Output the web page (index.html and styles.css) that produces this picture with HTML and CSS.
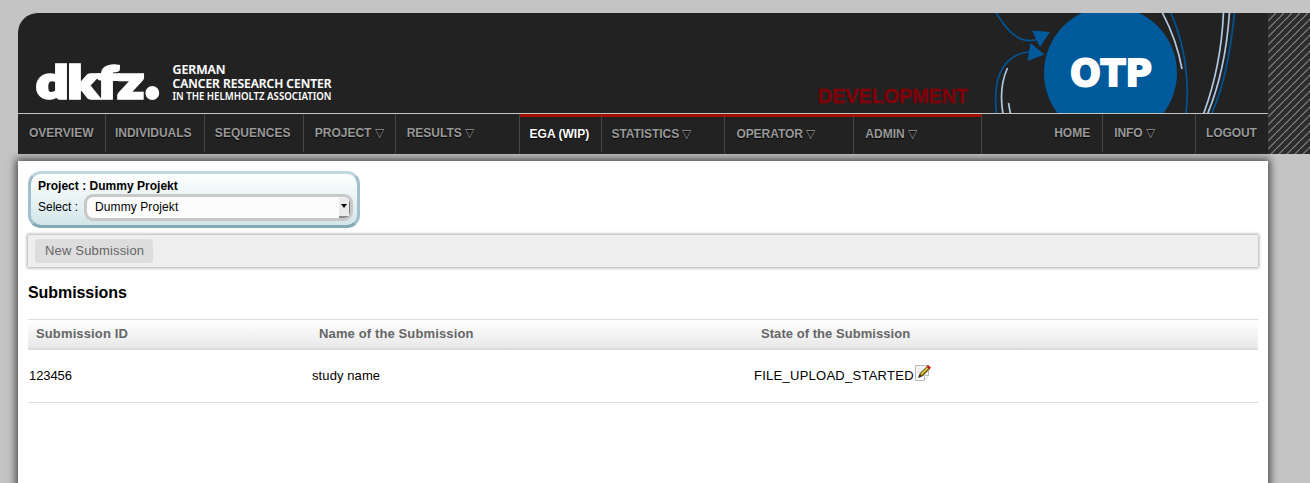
FILE: index.html
```html
<!DOCTYPE html>
<html lang="en">
<head>
<meta charset="utf-8">
<title>OTP - Submissions</title>
<link rel="stylesheet" href="styles.css">
</head>
<body>
<header class="top">
  <div class="header">
    <div class="banner">
      <svg class="banner-art" width="1250" height="100" viewBox="18 13 1250 100">
        <g class="logo">
          <text class="logo-main" x="36.500" y="98" textLength="107" lengthAdjust="spacingAndGlyphs">dkfz</text>
          <circle cx="152.300" cy="93" r="6.900"/>
          <text class="logo-sub" x="172.500" y="74" textLength="53" lengthAdjust="spacingAndGlyphs">GERMAN</text>
          <text class="logo-sub" x="172.500" y="87.500" textLength="159" lengthAdjust="spacingAndGlyphs">CANCER RESEARCH CENTER</text>
          <text class="logo-small" x="172.500" y="99.500" textLength="159" lengthAdjust="spacingAndGlyphs">IN THE HELMHOLTZ ASSOCIATION</text>
        </g>
        <text class="stage" x="818" y="103" textLength="150" lengthAdjust="spacingAndGlyphs">DEVELOPMENT</text>
        <circle class="blue-fill" cx="1110.500" cy="73" r="66.500"/>
        <g class="blue-line">
          <path d="M995.500 12C1007 31 1020 45 1037 39.500"/>
          <path d="M996.500 114C992 74 1005 54 1031 51.500"/>
          <path d="M1170.500 12C1184 42 1190 79 1186 114"/>
          <path d="M1234.500 12C1231 49 1225 84 1211.500 114"/>
        </g>
        <path class="blue-fill" d="M1032 30.500L1050 32L1040 47zM1030.500 43L1044.500 54.500L1027.500 61z"/>
        <g class="pale-line">
          <path d="M1007.500 68C1001 82 1000.500 99 1003 114"/>
          <path d="M1008.500 103L1010.500 114"/>
          <path d="M1162 12C1171 29 1178 47 1182 69"/>
          <path d="M1223.500 12C1222 48 1215 83 1203.500 114"/>
          <path d="M1229.500 12C1227 49 1220 84 1207.500 114"/>
        </g>
        <text class="otp" x="1070" y="85.500" textLength="82" lengthAdjust="spacingAndGlyphs">OTP</text>
      </svg>
    </div>
    <nav class="menu">
      <a class="item overview short">OVERVIEW</a>
      <a class="item individuals short">INDIVIDUALS</a>
      <a class="item sequences short">SEQUENCES</a>
      <a class="item project">PROJECT <i class="arrow">▽</i></a>
      <a class="item results">RESULTS <i class="arrow">▽</i></a>
      <a class="item ega red short">EGA (WIP)</a>
      <a class="item statistics red">STATISTICS <i class="arrow">▽</i></a>
      <a class="item operator red">OPERATOR <i class="arrow">▽</i></a>
      <a class="item admin red">ADMIN <i class="arrow">▽</i></a>
      <a class="item home short">HOME</a>
      <a class="item info">INFO <i class="arrow">▽</i></a>
      <a class="item logout">LOGOUT</a>
    </nav>
  </div>
  <svg class="hatch" width="42" height="141">
    <defs><pattern id="stripes" width="8" height="8" patternUnits="userSpaceOnUse">
      <rect width="8" height="8" fill="#2d2d2d"/>
      <path d="M-1 9L9-1" stroke="#858585" stroke-width="1.200"/>
    </pattern></defs>
    <rect width="42" height="141" fill="url(#stripes)"/>
  </svg>
</header>
<main class="content">
  <section class="project-box">
    <div class="project-title">Project : Dummy Projekt</div>
    <div class="project-row">
      <span class="select-label">Select :</span>
      <div class="select"><span class="select-value">Dummy Projekt</span><span class="select-button"></span></div>
    </div>
  </section>
  <div class="toolbar"><a class="button">New Submission</a></div>
  <h1 class="title">Submissions</h1>
  <div class="table">
    <div class="row head"><span>Submission ID</span><span>Name of the Submission</span><span class="head-state">State of the Submission</span></div>
    <div class="row data"><span class="c-id">123456</span><span class="c-name">study name</span><span class="state"><span class="state-text">FILE_UPLOAD_STARTED</span><svg class="edit" width="16" height="16" viewBox="0 0 16 16">
      <path d="M.5.500h13v10l-4 5h-9z" fill="#f6f6f6" stroke="#b9b9b9"/>
      <path d="M9.500 15v-4.500h4" fill="#fff" stroke="#b9b9b9"/>
      <path d="M2.500 4h6M2.500 6h5M2.500 8h3" stroke="#e2e2e2"/>
      <path d="M4 12l1-4L12 1.200l3 2.600L8 11z" fill="#6b5810"/>
      <path d="M5.500 9L12.500 2l1.200 1L6.800 10z" fill="#e9d34a"/>
      <path d="M3 13l1.500-4 2.500 2.500z" fill="#34301f"/>
      <path d="M11.500 1.500L13 0l3 2.500-1.500 2z" fill="#c51d1d"/>
    </svg></span></div>
  </div>
</main>
</body>
</html>
```
FILE: styles.css
```css
* { box-sizing: border-box; }
body {
  margin: 0;
  height: 483px;
  overflow: hidden;
  display: flex;
  flex-direction: column;
  background: #c4c4c4;
  color: #000;
  font-family: "Liberation Sans", Arial, sans-serif;
  font-size: 13px;
}
.top { display: flex; padding: 13px 0 0 18px; flex: none; }
.header { width: 1250px; height: 141px; background: #222; border-top-left-radius: 20px; overflow: hidden; }
.banner { height: 101px; border-bottom: 1px solid #c4c4c4; }
.banner-art { display: block; }
.hatch { display: block; flex: none; }
.logo { fill: #fff; }
.logo-main { font: 900 44px Lato, sans-serif; stroke: #fff; stroke-width: 3.4px; }
.logo-sub { font: 600 12px "Noto Sans", sans-serif; stroke: #fff; stroke-width: .15px; }
.logo-small { font: 600 10px "Noto Sans", sans-serif; }
.stage { font: bold 20px "Liberation Sans", sans-serif; fill: #820008; stroke: #820008; stroke-width: .3px; }
.otp { font: bold 37px "DejaVu Sans", sans-serif; fill: #fff; stroke: #fff; stroke-width: 1.8px; }
.blue-fill { fill: #005a9c; }
.blue-line { fill: none; stroke: #005596; stroke-width: 1.7px; }
.pale-line { fill: none; stroke: #b0c8e4; stroke-width: 1.7px; }

.menu { display: flex; height: 40px; }
.item {
  height: 40px;
  padding-left: 10px;
  border-right: 1px solid #464646;
  color: #999;
  font-size: 12px;
  font-weight: bold;
  line-height: 38px;
  white-space: nowrap;
  text-shadow: 0 1px 1px #000;
}
.short { height: 38px; }
.arrow { font-style: normal; font-weight: normal; }
.red { border-top: 3px solid #a01000; line-height: 34px; }
.overview { width: 88px; padding-left: 11px; }
.individuals { width: 99px; padding-left: 9px; }
.sequences { width: 99px; }
.project { width: 92px; padding-left: 11px; }
.results { width: 124px; padding-left: 11px; }
.ega { width: 82px; color: #fff; }
.statistics { width: 124px; }
.operator { width: 129px; padding-left: 11px; }
.admin { width: 128px; padding-left: 11px; }
.home { width: 121px; padding-left: 72px; }
.info { width: 93px; padding-left: 11px; }
.logout { width: 72px; border-right: 0; letter-spacing: -.1px; }
.sequences { letter-spacing: .05px; }
.info, .operator, .statistics { letter-spacing: -.06px; }

.content {
  flex: none;
  width: 1250px;
  height: 342px;
  margin: 7px 0 0 18px;
  padding: 10px;
  background: #fff;
  box-shadow: 0 0 8px 2px #444;
}
.project-box {
  width: 332px;
  height: 57px;
  padding: 4px 4px 4px 7px;
  border: 3px solid #a0c0cb;
  border-top-color: #c0d6df;
  border-bottom-color: #83abb5;
  border-radius: 13px;
  background: linear-gradient(#fff, #d2e5e9);
  font-size: 12px;
}
.project-title { height: 16px; line-height: 17px; font-weight: bold; letter-spacing: .02px; }
.project-row { display: flex; height: 28px; line-height: 26px; }
.select-label { width: 46px; flex: none; }
.select {
  display: flex;
  justify-content: space-between;
  flex: none;
  width: 269px;
  height: 27px;
  border: 3px solid #c8c8c8;
  border-radius: 9px;
  background: #fcfcfc;
  overflow: hidden;
}
.select-value { padding-left: 8px; line-height: 21px; letter-spacing: .1px; }
.select-button {
  display: flex;
  align-items: center;
  justify-content: center;
  width: 11px;
  height: 20px;
  margin-top: 1px;
  background: #eaeaea;
  border-right: 1px solid #777;
  border-bottom: 2px solid #888;
}
.select-button::before { content: ""; border: 3.500px solid transparent; border-top: 4px solid #000; border-bottom: 0; margin-top: -2px; }
.toolbar {
  height: 32px;
  margin-top: 7px;
  padding: 4px 7px;
  background: #eee;
  box-shadow: 0 0 3px 1px #aaa;
}
.button {
  display: block;
  width: 118px;
  height: 24px;
  padding-left: 10px;
  border-radius: 4px;
  background: #ddd;
  color: #666;
  line-height: 24px;
  letter-spacing: .17px;
}
.title { height: 20px; margin: 16px 0; font-size: 16px; line-height: 20px; letter-spacing: -.07px; }
.row { display: grid; grid-template-columns: 283px 442px 1fr; }
.head {
  height: 31px;
  padding-left: 8px;
  border-top: 1px solid #ddd;
  border-bottom: 2px solid #ddd;
  background: linear-gradient(#fff, #e8e8e8);
  color: #666;
  font-weight: bold;
  line-height: 28px;
  letter-spacing: .13px;
}
.head-state { letter-spacing: .05px; }
.data { height: 53px; padding-left: 1px; border-bottom: 1px solid #ddd; line-height: 51px; }
.c-id { letter-spacing: -.1px; }
.c-name { letter-spacing: .1px; }
.state { display: flex; }
.state-text { letter-spacing: .26px; }
.edit { margin: 15px 0 0 1px; }
```
